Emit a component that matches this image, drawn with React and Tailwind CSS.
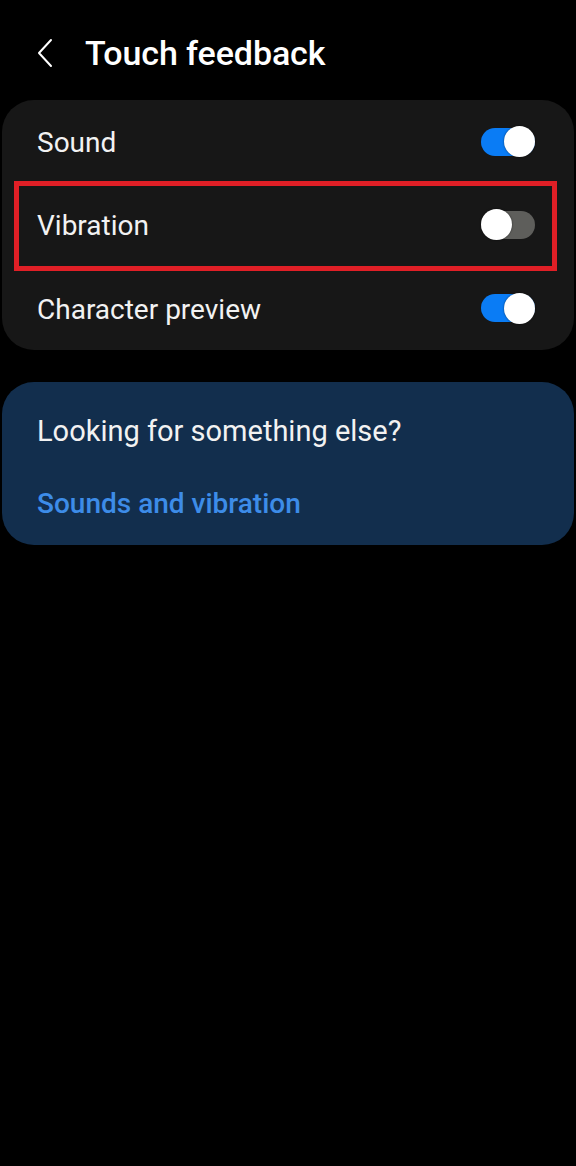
import React from "react";

const Toggle = ({ on }) => {
  return (
    <div
      className={
        on
          ? "relative w-[54px] h-[28px] rounded-full bg-[#0a7cf5] flex items-center justify-end"
          : "relative w-[54px] h-[28px] rounded-full bg-[#5e5e5b] flex items-center justify-start"
      }
    >
      <div className="w-[31px] h-[31px] rounded-full bg-white shadow-[0_0_2px_rgba(0,0,0,0.6)]" />
    </div>
  );
};

const Row = ({ label, on, highlight }) => {
  return (
    <div className="relative h-[84px] flex items-center justify-between pl-[35px] pr-[39px]">
      {highlight && (
        <div className="absolute left-[12px] right-[17px] top-[-2px] bottom-[-4px] border-[5px] border-[#e01f26]" />
      )}
      <span className="text-[28px] text-[#f2f2f2] pt-[3px]">{label}</span>
      <Toggle on={on} />
    </div>
  );
};

export default function App() {
  return (
    <div
      className="w-[576px] h-[1166px] bg-black overflow-hidden"
      style={{ fontFamily: "Roboto, 'Noto Sans', sans-serif" }}
    >
      <header className="h-[100px] flex items-center pl-[36px] pt-[6px]">
        <svg width="18" height="30" viewBox="0 0 18 30" className="mr-[31px]">
          <path d="M15 2 L3 15 L15 28" fill="none" stroke="#ffffff" strokeWidth="2" strokeLinecap="round" strokeLinejoin="round" />
        </svg>
        <h1 className="text-[34px] font-medium text-white tracking-[-0.1px]">Touch feedback</h1>
      </header>

      <section className="mx-[2px] rounded-[32px] bg-[#171717] h-[250px] flex flex-col justify-center">
        <Row label="Sound" on />
        <Row label="Vibration" highlight />
        <Row label="Character preview" on />
      </section>

      <section className="mt-[32px] mx-[2px] h-[163px] rounded-[32px] bg-[#122e4d] pl-[35px] flex flex-col justify-center">
        <p className="text-[29px] text-[#f2f2f2] leading-none mt-[8px]">Looking for something else?</p>
        <a className="mt-[44px] text-[28px] font-medium text-[#3d8ce8] leading-none">Sounds and vibration</a>
      </section>
    </div>
  );
}
